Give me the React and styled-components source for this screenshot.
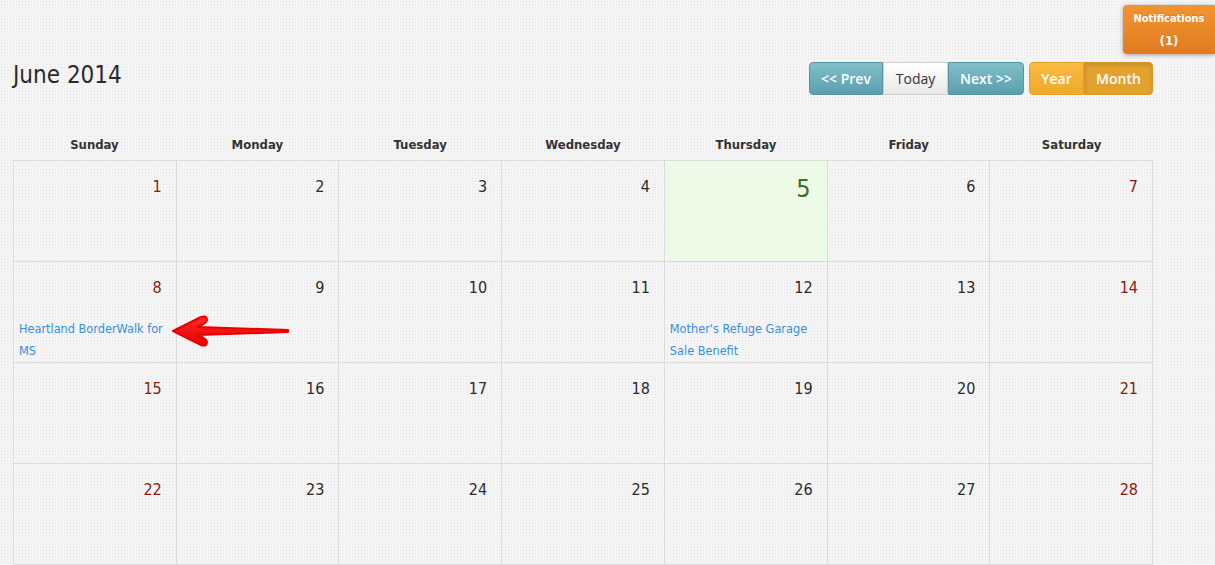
import React from "react";
import styled, { createGlobalStyle } from "styled-components";

const Global = createGlobalStyle`
  html, body { margin: 0; padding: 0; }
  body {
    background-color: #f3f3f3;
    background-image:
      radial-gradient(rgba(0,0,0,0.035) 0.6px, transparent 0.9px),
      radial-gradient(rgba(255,255,255,0.6) 0.6px, transparent 0.9px);
    background-size: 3px 3px, 3px 3px;
    background-position: 0 0, 1.5px 1.5px;
    font-family: "DejaVu Sans Condensed", "DejaVu Sans", sans-serif;
    color: #333;
    overflow: hidden;
  }
`;

const Page = styled.div`
  position: relative;
  width: 1215px;
  height: 565px;
  box-sizing: border-box;
  padding: 62px 62px 0 13px;
`;

const Notifications = styled.div`
  position: absolute;
  top: 5px;
  right: 0;
  width: 92px;
  height: 49px;
  box-sizing: border-box;
  border-radius: 4px 0 0 4px;
  background: linear-gradient(#f29433, #e07b1f);
  box-shadow: 0 1px 4px rgba(0, 0, 0, 0.35);
  color: #fff;
  font-weight: bold;
  font-size: 11px;
  text-align: center;
  padding-top: 3px;
  line-height: 22px;
  text-shadow: 0 -1px 0 rgba(0,0,0,0.1);
`;

const Count = styled.span`
  display: block;
  font-size: 13px;
`;

const Toolbar = styled.div`
  display: flex;
  align-items: center;
  justify-content: space-between;
  height: 33px;
`;

const Title = styled.h2`
  margin: 0 0 8px;
  font-weight: normal;
  font-size: 24px;
  color: #2b2b2b;
`;

const Groups = styled.div`
  display: flex;
  gap: 5px;
`;

const Group = styled.div`
  display: flex;
  & > button:first-child { border-radius: 4px 0 0 4px; }
  & > button:last-child { border-radius: 0 4px 4px 0; }
`;

const variants = {
  info: `
    background: linear-gradient(#80bfc9, #5b9fae);
    border-color: #5a95a3;
    color: #fff;
  `,
  plain: `
    background: linear-gradient(#fff, #e8e8e8);
    border-color: #cfcfcf;
    color: #333;
    font-weight: normal;
  `,
  warn: `
    background: linear-gradient(#f9bb40, #eea92c);
    border-color: #e3a12c;
    color: #fff;
  `,
  warnActive: `
    background: #e3a12e;
    border-color: #d79627;
    color: #fff;
    box-shadow: inset 0 2px 4px rgba(0,0,0,0.12);
  `,
};

const Btn = styled.button`
  height: 33px;
  width: ${(p) => p.$w}px;
  padding: 0;
  border: 1px solid;
  border-radius: 0;
  font-family: "Open Sans", sans-serif;
  font-size: 14px;
  font-weight: 600;
  cursor: pointer;
  ${(p) => variants[p.$v]}
`;

const Calendar = styled.div`
  margin-top: 32px;
  width: 1140px;
`;

const HeadRow = styled.div`
  display: grid;
  grid-template-columns: repeat(7, 1fr);
  height: 33px;
`;

const HeadCell = styled.div`
  display: flex;
  align-items: flex-end;
  justify-content: center;
  padding-bottom: 8px;
  box-sizing: border-box;
  font-weight: bold;
  font-size: 13px;
  color: #333;
`;

const Grid = styled.div`
  display: grid;
  grid-template-columns: repeat(7, 1fr);
  grid-auto-rows: 101px;
  border-top: 1px solid #dcdcdc;
  border-left: 1px solid #dcdcdc;
`;

const Cell = styled.div`
  border-right: 1px solid #dcdcdc;
  border-bottom: 1px solid #dcdcdc;
  background: ${(p) => (p.$today ? "#edfae6" : "transparent")};
  padding: 16px 2px 0 5px;
  box-sizing: border-box;
  position: relative;
`;

const DayNum = styled.div`
  text-align: right;
  padding-right: ${(p) => (p.$today ? "14px" : "12px")};
  font-size: ${(p) => (p.$today ? "25px" : "16px")};
  line-height: ${(p) => (p.$today ? "26px" : "20px")};
  margin-top: ${(p) => (p.$today ? "-1px" : "0")};
  color: ${(p) => (p.$today ? "#3c6f1d" : p.$weekend ? "#8a1a0c" : "#2b2b2b")};
`;

const Event = styled.a`
  display: block;
  margin-top: 20px;
  font-size: 12.6px;
  line-height: 22px;
  color: #3a8fd6;
  text-decoration: none;
`;

const Arrow = styled.svg`
  position: absolute;
  left: 168px;
  top: 310px;
`;

const days = ["Sunday", "Monday", "Tuesday", "Wednesday", "Thursday", "Friday", "Saturday"];
const events = {
  8: "Heartland BorderWalk for MS",
  12: "Mother's Refuge Garage Sale Benefit",
};

export default function App() {
  const cells = [];
  for (let d = 1; d <= 28; d++) cells.push(d);
  return (
    <Page>
      <Global />
      <Notifications>
        Notifications
        <Count>(1)</Count>
      </Notifications>
      <Toolbar>
        <Title>June 2014</Title>
        <Groups>
          <Group>
            <Btn $v="info" $w={74}>&lt;&lt; Prev</Btn>
            <Btn $v="plain" $w={65}>Today</Btn>
            <Btn $v="info" $w={76}>Next &gt;&gt;</Btn>
          </Group>
          <Group>
            <Btn $v="warn" $w={55}>Year</Btn>
            <Btn $v="warnActive" $w={69}>Month</Btn>
          </Group>
        </Groups>
      </Toolbar>
      <Calendar>
        <HeadRow>
          {days.map((d) => (
            <HeadCell key={d}>{d}</HeadCell>
          ))}
        </HeadRow>
        <Grid>
          {cells.map((d, i) => {
            const weekend = i % 7 === 0 || i % 7 === 6;
            const today = d === 5;
            return (
              <Cell key={d} $today={today}>
                <DayNum $weekend={weekend} $today={today}>
                  {d}
                </DayNum>
                {events[d] && <Event href="#">{events[d]}</Event>}
              </Cell>
            );
          })}
        </Grid>
      </Calendar>
      <Arrow width="125" height="42" viewBox="0 0 125 42">
        <defs>
          <linearGradient id="ag" x1="0" y1="0" x2="0" y2="1">
            <stop offset="0" stopColor="#ff2a2a" />
            <stop offset="1" stopColor="#e00000" />
          </linearGradient>
        </defs>
        <path
          d="M5 21 L33 7 Q39 5 39 10 Q39 13 30 17 L120 20 L120 22 L30 25 Q39 29 39 32 Q39 37 33 35 Z"
          fill="url(#ag)"
          stroke="#e80000"
          strokeWidth="2"
          strokeLinejoin="round"
        />
      </Arrow>
    </Page>
  );
}
